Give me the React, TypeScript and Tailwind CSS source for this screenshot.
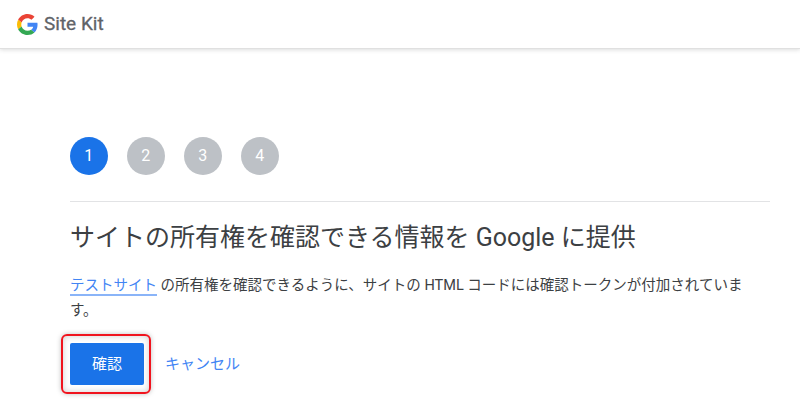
const STEPS = [1, 2, 3, 4];

const GoogleLogo = () => (
  <svg width="21" height="21" viewBox="0 0 48 48">
    <path fill="#EA4335" d="M24 9.5c3.54 0 6.71 1.22 9.21 3.6l6.85-6.85C35.9 2.38 30.47 0 24 0 14.62 0 6.51 5.38 2.56 13.22l7.98 6.19C12.43 13.72 17.74 9.5 24 9.5z" />
    <path fill="#4285F4" d="M46.98 24.55c0-1.57-.15-3.09-.38-4.55H24v9.02h12.94c-.58 2.96-2.26 5.48-4.78 7.18l7.73 6c4.51-4.18 7.09-10.36 7.09-17.65z" />
    <path fill="#FBBC05" d="M10.53 28.59c-.48-1.45-.76-2.99-.76-4.59s.27-3.14.76-4.59l-7.98-6.19C.92 16.46 0 20.12 0 24c0 3.88.92 7.54 2.56 10.78l7.97-6.19z" />
    <path fill="#34A853" d="M24 48c6.48 0 11.93-2.13 15.89-5.81l-7.73-6c-2.15 1.45-4.92 2.3-8.16 2.3-6.26 0-11.57-4.22-13.47-9.91l-7.98 6.19C6.51 42.62 14.62 48 24 48z" />
  </svg>
);

const App = () => {
  return (
    <div className="w-[800px] h-[400px] overflow-hidden bg-white font-['Roboto','Noto_Sans_CJK_JP',sans-serif]">
      {/* Header */}
      <header className="h-[49px] flex items-center pl-[17px] gap-[6px] border-b border-[#e0e0e0] shadow-[0_1px_4px_rgba(60,64,67,0.18)]">
        <GoogleLogo />
        <span className="text-[19px] text-[#5f6368] [-webkit-text-stroke:0.3px_#5f6368]">Site Kit</span>
      </header>

      <main className="mx-[70px] w-[700px]">
        {/* Stepper */}
        <div className="flex gap-[19.5px] pt-[88px] pb-[26px] border-b border-[#e2e3e5]">
          {STEPS.map((step) => (
            <div
              key={step}
              className={`w-[37.5px] h-[37.5px] rounded-full flex items-center justify-center text-[16px] text-white ${
                step === 1 ? 'bg-[#1a73e8]' : 'bg-[#bdc1c6]'
              }`}
            >
              {step}
            </div>
          ))}
        </div>

        <h1 className="mt-[18px] text-[25px] leading-[36px] text-[#3c4043]">
          サイトの所有権を確認できる情報を Google に提供
        </h1>

        <p className="mt-[17.5px] w-[690px] text-[14.5px] leading-[25px] text-[#3c4043]">
          <a className="text-[#4285f4] border-b-2 border-[#8ab4f8]">テストサイト</a> の所有権を確認できるように、サイトの HTML コードには確認トークンが付加されています。
        </p>

        <div className="mt-[20px] flex items-center">
          <div className="relative">
            <button className="block w-[74px] h-[42px] rounded-[2px] bg-[#1a73e8] text-[15px] text-white">
              確認
            </button>
            {/* Red highlight drawn over the screenshot */}
            <div className="absolute -left-[9px] -right-[7px] -top-[9px] -bottom-[9px] rounded-[6px] border-2 border-[#f0141e] shadow-[0_0_5px_rgba(0,0,0,0.25),inset_0_0_6px_rgba(0,0,0,0.2)]" />
          </div>
          <a className="ml-[21px] text-[15px] text-[#4285f4]">キャンセル</a>
        </div>
      </main>
    </div>
  );
};

export default App;
